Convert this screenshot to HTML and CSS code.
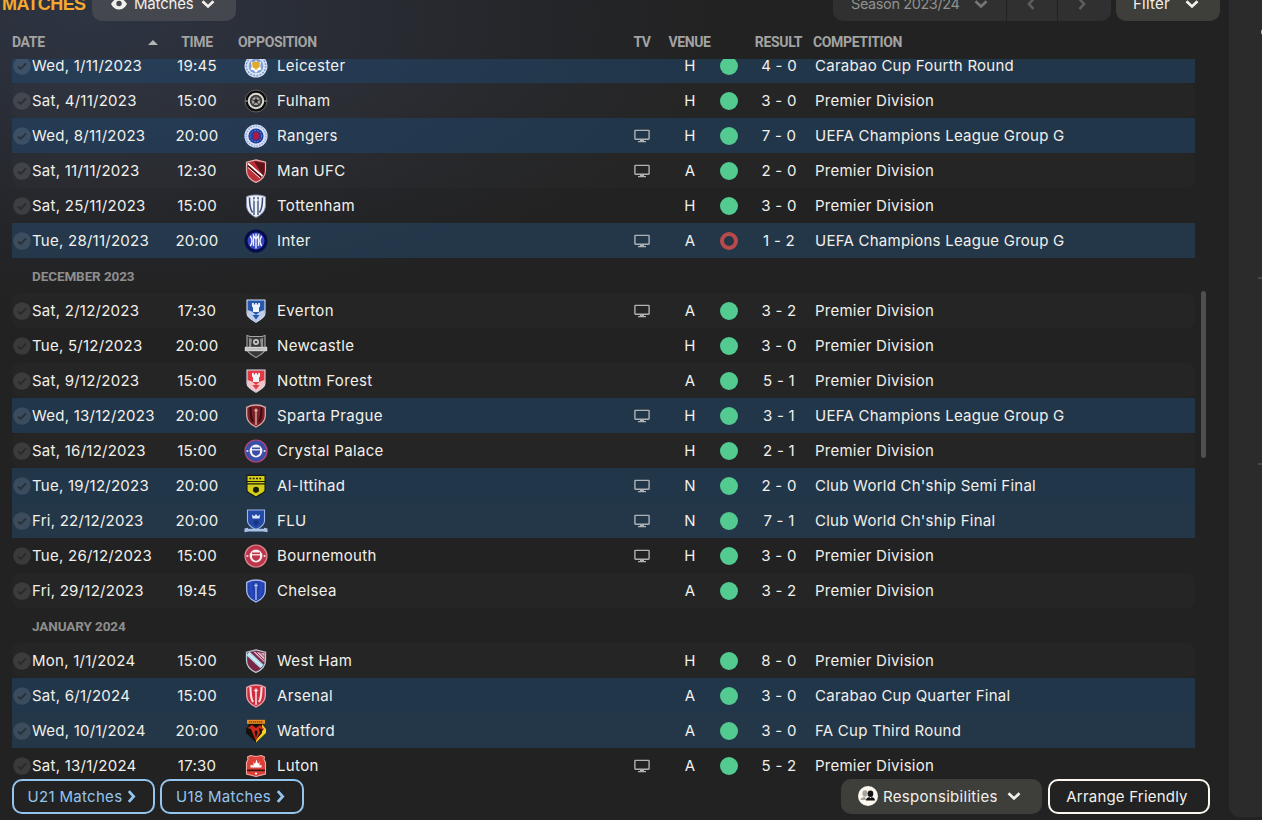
FILE: index.html
```
<!DOCTYPE html>
<html lang="en">
<head>
  <meta charset="UTF-8">
  <title>Matches</title>
  <link rel="stylesheet" href="styles.css">
</head>
<body>

  <!-- icons and club crests -->
  <svg class="defs" width="0" height="0">
    <symbol id="chevron" viewBox="0 0 14 14"><path d="M1.500 4.300L7 9.500l5.500-5.200" fill="none" stroke="currentColor" stroke-width="2.700"/></symbol>
    <symbol id="chevron-right" viewBox="0 0 10 14"><path d="M2.500 2l4.500 5-4.500 5" fill="none" stroke="currentColor" stroke-width="2.600"/></symbol>
    <symbol id="check" viewBox="0 0 18 18"><circle cx="9" cy="9" r="8.800" fill="#fff" fill-opacity=".11"/><path d="M5 9.500l2.700 2.500L13 6.300" fill="none" stroke="#1c1f22" stroke-opacity=".6" stroke-width="1.900"/></symbol>
    <symbol id="tv" viewBox="0 0 16 14"><rect x=".9" y="1.400" width="14.200" height="8.800" rx=".6" fill="none" stroke="currentColor" stroke-width="1.400"/><path d="M6 10.500h4v1.500h2v1.200H4V12h2z" fill="currentColor"/></symbol>
    <symbol id="eye" viewBox="0 0 16 12"><path d="M0 6C2 2.300 4.800.5 8 .5S14 2.300 16 6c-2 3.700-4.800 5.500-8 5.500S2 9.700 0 6z" fill="currentColor"/><circle cx="8" cy="5.500" r="2.700" fill="#44474e"/></symbol>
    <symbol id="people" viewBox="0 0 20 20"><circle cx="10" cy="10" r="10" fill="#fbf7ee"/><g fill="#a9a59e"><ellipse cx="7" cy="7.500" rx="2.600" ry="3.200"/><path d="M2.500 14c.3-2.500 2-2.800 4-3.300L9 14z"/></g><ellipse cx="12.500" cy="7.700" rx="2.800" ry="3.300" fill="#111"/><path d="M8 14.500c.2-2.600 1.600-3 3.300-3.500l1.200 1.300 1.200-1.300c1.700.5 3.100.9 3.300 3.500z" fill="#111"/></symbol>

    <symbol id="leicester" viewBox="0 0 24 24"><circle cx="12" cy="12" r="11.500" fill="#d9e4f5"/><circle cx="12" cy="12" r="9.700" fill="none" stroke="#7e9bd2" stroke-width="1.500" stroke-dasharray="2 1.200"/><circle cx="12" cy="12" r="7.300" fill="#7f9cd6"/><path d="M7 7.500l3.200 1L12 6l1.800 2.500 3.200-1-.7 4.500 1 3.500-3.300 1L12 19l-2-2.500-3.300-1 1-3.500z" fill="#fff"/><path d="M8 8.500l4-1 4 1-.5 5-2 .5-.5 2.500-1-2-1 2-.5-2.500-2-.5z" fill="#e0ab2c"/></symbol>
    <symbol id="fulham" viewBox="0 0 24 24"><circle cx="12" cy="12" r="11" fill="#0d0d0d" stroke="#6a6964" stroke-width=".9"/><circle cx="12" cy="12" r="7.200" fill="#3a3937" stroke="#dddbd6" stroke-width="2"/><path d="M12 7l4.800 3.500-1.800 5.500H9l-1.800-5.500z" fill="#a9a7a2"/><path d="M12 12V7M12 12l4.800-1.500M12 12l3 4M12 12l-3 4M12 12l-4.800-1.500" stroke="#2a2a2a" stroke-width="1"/><circle cx="12" cy="12" r="1.800" fill="#222"/><path d="M1.500 12h2M20.500 12h2" stroke="#ddd"/></symbol>
    <symbol id="rangers" viewBox="0 0 24 24"><circle cx="12" cy="12" r="11.600" fill="#d5e0f7"/><circle cx="12" cy="12" r="9.900" fill="none" stroke="#8fa8de" stroke-width="1.400" stroke-dasharray="1.500 1.200"/><circle cx="12" cy="12" r="7.600" fill="#203f9f"/><circle cx="12" cy="12" r="5.600" fill="none" stroke="#6f8bd0" stroke-width="1" stroke-dasharray="1.500 1.500"/><ellipse cx="12" cy="12" rx="3" ry="4" fill="#b01745"/></symbol>
    <symbol id="manufc" viewBox="0 0 24 24"><path d="M12 .8l9.500 2.400v8C21.500 17 17.500 21 12 23.400 6.500 21 2.500 17 2.500 11.200v-8z" fill="#ba2f38" stroke="#e5b1ae" stroke-width="1.200"/><path d="M10 2.200l10.600 1.700V12c0 2-.8 4-1.600 5z" fill="#5e1219"/><path d="M4 4.500L18.500 17" stroke="#fff" stroke-width="1.700"/><path d="M4 6.800L17 18" stroke="#2b1113" stroke-width="1.200"/><path d="M4 8.500L16 19" stroke="#fff" stroke-width=".9"/></symbol>
    <symbol id="tottenham" viewBox="0 0 24 24"><path d="M12 1c3 0 6 .3 9.500 1.700v8C21.500 17 17.500 21 12 23.400 6.500 21 2.500 17 2.500 10.700v-8C6 1.300 9 1 12 1z" fill="#eef1f6" stroke="#8390ae" stroke-width="1"/><path d="M5.500 3.500c0 6 0 11 3 15M18.500 3.500c0 6 0 11-3 15" fill="none" stroke="#334878" stroke-width="1.500"/><path d="M10 3v18M14 3v18" stroke="#334878" stroke-width="1.300"/><path d="M9.500 6h5" stroke="#fff" stroke-width="1.300"/></symbol>
    <symbol id="inter" viewBox="0 0 24 24"><circle cx="12" cy="12" r="11.500" fill="#070b4a"/><circle cx="12" cy="12" r="8.500" fill="#3546c4"/><path d="M6.300 7c2 3 2 7 0 10M17.700 7c-2 3-2 7 0 10M9.500 17V6.500l2.500 4 2.500-4V17M12 4.500v15" fill="none" stroke="#eef0ff" stroke-width="1.400"/></symbol>
    <symbol id="castle" viewBox="0 0 24 24"><path d="M3 1h18v13.500c0 3.500-5 6.500-9 8.800-4-2.300-9-5.300-9-8.800z" fill="currentColor" stroke="#d5e2f5" stroke-width="1.100"/><path d="M8 4h1.800v1.500h1.400V4h1.600v1.500h1.400V4H16v3.500l-1 1V13H9V8.500l-1-1z" fill="#f1f5fb"/><path d="M3.500 11l4.500 1.500 4 3.500 4-3.500 4.500-1.500v3.500c0 3-4.500 6-8.500 8-4-2-8.500-5-8.500-8z" fill="#fff" fill-opacity=".7"/><path d="M8.500 16h7L12 20.500z" fill="currentColor"/></symbol>
    <symbol id="newcastle" viewBox="0 0 24 24"><path d="M3 1.500l3 1h12l3-1v14c0 3-5 5.500-9 8-4-2.500-9-5-9-8z" fill="#383838" stroke="#a5a5a5" stroke-width="1.100"/><path d="M5 4l3 1-1 8H5zM19 4l-3 1 1 8h2z" fill="#8f8f8f"/><circle cx="12" cy="8" r="3" fill="#c9c9c9"/><circle cx="12" cy="8" r="1.300" fill="#444"/><path d="M.8 12.800h22.400v4.400H.8z" fill="#d2d2d2"/><path d="M3 15h18" stroke="#aaa" stroke-width=".8"/></symbol>
    <symbol id="sword" viewBox="0 0 24 24"><path d="M12 .8c3 0 6.500.9 9.500 2.400v8C21.500 17 17.500 21 12 23.400 6.500 21 2.500 17 2.500 11.200v-8C5.500 1.700 9 .8 12 .8z" fill="currentColor"/><path class="stripes" d="M6.500 3c0 6 0 11 2.500 15M17.500 3c0 6 0 11-2.500 15" fill="none" stroke-width="2"/><path d="M12 4.500V21M10.300 6.500h3.400" class="blade" stroke-width="1.300"/><path class="rim" d="M12 1c3 0 6.500.9 9.300 2.300v8C21.300 17 17.500 20.700 12 23 6.500 20.700 2.700 17 2.700 11.300v-8C5.500 1.900 9 1 12 1z" fill="none" stroke-width="1.300"/></symbol>
    <symbol id="roundel" viewBox="0 0 24 24"><circle cx="12" cy="12" r="11" fill="currentColor" class="ring" stroke-width="1.200"/><circle cx="12" cy="12" r="6.400" fill="#f4f0f4"/><path d="M8 8.500h8v4.500c0 2-2 3.300-4 4-2-.7-4-2-4-4z" fill="currentColor"/><path d="M7.500 10.800h9" stroke="#fff" stroke-width="1.200"/><path d="M2.500 12h1.800M19.700 12h1.800" stroke="#fff" stroke-width="1.400"/></symbol>
    <symbol id="ittihad" viewBox="0 0 24 24"><path d="M2.500.8h19v15c0 3-5 5.300-9.500 7.700-4.500-2.400-9.500-4.700-9.500-7.700z" fill="#17190b"/><path d="M3.500 2h17v5h-17zM3.500 8h17v1.300h-17zM3.500 10.500h17V16c0 2-4.500 4-8.500 6.200-4-2.200-8.500-4.200-8.500-6.200z" fill="#d3cc18"/><path d="M5.500 4.500h13" stroke="#17190b" stroke-width="1.300" stroke-dasharray="1.800 1.500"/><circle cx="12" cy="15.800" r="3" fill="#17190b"/></symbol>
    <symbol id="flu" viewBox="0 0 24 24"><path d="M3.500 1h17v11c0 4-4 6.500-8.500 8.500C7.500 18.500 3.500 16 3.500 12z" fill="#2449a5" stroke="#9db8ea" stroke-width="1.100"/><path d="M8.500 9.500L8 5.500l2.300 1.700L12 5l1.700 2.200L16 5.500l-.5 4z" fill="#dce8ff"/><path d="M9.500 11.500h5v3L12 17l-2.500-2.500z" fill="#16357f"/><path d="M.5 19.500l3.500-.8v1h16v-1l3.500.8v3.700l-4-.7h-15l-4 .7z" fill="#a9c2ea"/></symbol>
    <symbol id="westham" viewBox="0 0 24 24"><path d="M12 .8l9.500 2.400v8C21.500 17 17.500 21 12 23.400 6.500 21 2.500 17 2.500 11.200v-8z" fill="#7a2745" stroke="#b9c8d5" stroke-width="1.300"/><path d="M9 2.500l11.500 1.700v9z" fill="#dcb9c8"/><path d="M12 3l8 8M15.500 3l5 5M9.500 3.500l10 10" stroke="#8a3655" stroke-width="1"/><path d="M4 4.500L18 17.500" stroke="#a9dcec" stroke-width="5"/><path d="M4 4.500L18 17.500" stroke="#e1f2f8" stroke-width="1.200"/></symbol>
    <symbol id="watford" viewBox="0 0 24 24"><path d="M2 10l3.500-5h13L22 10v4L12 23.500 2 14z" fill="#15100a"/><path d="M18 5l4 5v4L12 23.500V21l6-7z" fill="#f2d21b"/><path d="M3.500 9L8 6l4 3 4-3 4 4-5 5-3 7-3-7-2-5z" fill="#cf2a1f"/><path d="M10.500 13l1.500 6 1.500-6-1.500-2zM15 9l4 2-3 3z" fill="#15100a"/><path d="M3 .8h18v4H3z" fill="#e88e22"/><path d="M5 2.800h14" stroke="#7a2c10" stroke-width="1.300" stroke-dasharray="1.300 .7"/></symbol>
    <symbol id="luton" viewBox="0 0 24 24"><path d="M3.500 3l3-1.500L12 2.500l5.500-1L20.500 3l-.5 2.500 1.500 3V20L12 22.500 2.500 20V8.500l1.500-3z" fill="#dc4038" stroke="#f0aaa2" stroke-width="1.100"/><path d="M6.500 11v2.500h11V11l-2 .5V8l-1.500 2-1.500-4.500L11 10 9.500 8v3.500z" fill="#fff"/><path d="M3 15.500h18v1.700H3z" fill="#3d1411"/><circle cx="12" cy="19.500" r="1.100" fill="#fff"/></symbol>
  </svg>

  <main class="matches">
    <div class="toolbar">
      <h1>Matches</h1>
      <div class="pill view"><svg class="eye"><use href="#eye"/></svg><span>Matches</span><svg class="chev"><use href="#chevron"/></svg></div>
      <div class="season">
        <div class="season-name"><span>Season 2023/24</span><svg class="chev"><use href="#chevron"/></svg></div>
        <div class="step"><svg class="arrow back"><use href="#chevron-right"/></svg></div>
        <div class="step"><svg class="arrow"><use href="#chevron-right"/></svg></div>
      </div>
      <div class="pill filter"><span>Filter</span><svg class="chev"><use href="#chevron"/></svg></div>
    </div>

    <div class="grid head">
      <div class="h-date"><span>Date</span><i class="sort"></i></div>
      <div class="center">Time</div>
      <div class="h-opp">Opposition</div>
      <div class="center">TV</div>
      <div class="center">Venue</div>
      <div></div>
      <div class="center">Result</div>
      <div class="h-comp">Competition</div>
    </div>

    <div class="list-wrap">
      <div class="list" id="list"></div>
      <div class="scrollbar"></div>
    </div>

    <div class="footer">
      <div class="btn blue">U21 Matches<svg class="arrow"><use href="#chevron-right"/></svg></div>
      <div class="btn blue">U18 Matches<svg class="arrow"><use href="#chevron-right"/></svg></div>
      <div class="pill resp"><svg class="people"><use href="#people"/></svg><span>Responsibilities</span><svg class="chev"><use href="#chevron"/></svg></div>
      <div class="btn white">Arrange Friendly</div>
    </div>
  </main>

  <aside class="side">
    <i class="gold"></i>
    <i class="tick first"></i>
    <i class="tick second"></i>
  </aside>

  <script src="script.js"></script>
</body>
</html>
```
FILE: styles.css
```
* {
  box-sizing: border-box;
}
body {
  margin: 0;
  width: 1262px;
  height: 820px;
  overflow: hidden;
  display: flex;
  background: radial-gradient(ellipse 640px 290px at 90px 20px, #2d3442 0%, #292c34 40%, #242528 75%, #222 100%) #222;
  color: #f2f0ea;
  font-family: Inter, "Liberation Sans", sans-serif;
  font-size: 15px;
  letter-spacing: 0.25px;
}
svg {
  display: block;
  flex: none;
}
.defs {
  position: absolute;
}
.matches {
  width: 1228px;
  height: 820px;
  display: flex;
  flex-direction: column;
}

/* top bar, scrolled half out of view */
.toolbar {
  display: flex;
  height: 35px;
  margin-top: -14px;
  line-height: 35px;
  flex: none;
}
h1 {
  width: 92px;
  margin: 0;
  padding-left: 2px;
  color: #f5a92f;
  font: bold 18px/37px "Liberation Sans", sans-serif;
  letter-spacing: -0.6px;
  text-transform: uppercase;
}
.pill {
  display: flex;
  align-items: center;
  border-radius: 10px;
  background: #3e3e3b;
  height: 35px;
}
.view {
  width: 144px;
  padding-left: 19px;
  background: #44474e;
  letter-spacing: -0.2px;
}
.eye {
  width: 16px;
  height: 12px;
  margin-right: 7px;
}
.view span {
  width: 67px;
}
.chev {
  width: 14px;
  height: 14px;
}
.season {
  display: flex;
  width: 278px;
  margin-left: 597px;
  border-radius: 10px;
  background: #303030;
  color: #90908e;
}
.season-name {
  display: flex;
  align-items: center;
  width: 173px;
  padding-left: 18px;
  font-size: 14.5px;
  letter-spacing: -0.4px;
}
.season-name span {
  width: 123px;
}
.season-name .chev {
  color: #777;
}
.step {
  display: flex;
  align-items: center;
  width: 51px;
  padding-left: 19px;
  border-left: 1px solid #222;
  color: #5e5e5e;
}
.arrow {
  width: 10px;
  height: 14px;
}
.back {
  transform: scaleX(-1);
}
.filter {
  width: 104px;
  margin-left: 5px;
  padding-left: 17px;
}
.filter span {
  width: 52px;
}

/* table columns */
.grid {
  display: grid;
  align-items: center;
  white-space: nowrap;
}
.center {
  display: flex;
  justify-content: center;
}
.head {
  grid-template-columns: 152px 66px 382px 60px 35px 43px 57px 1fr;
  height: 38px;
  margin-left: 12px;
  padding-top: 4px;
  flex: none;
  color: #a3a3a3;
  font: bold 14px Roboto, "Liberation Sans", sans-serif;
  letter-spacing: -0.35px;
  text-transform: uppercase;
}
.h-date {
  display: flex;
  align-items: center;
}
.h-date span {
  width: 136px;
}
.sort {
  border: 5px solid transparent;
  border-top: 0;
  border-bottom-color: #b5b5b5;
}
.h-opp {
  padding-left: 8px;
}
.h-comp {
  padding-left: 6px;
}

.list-wrap {
  display: flex;
  height: 720px;
  margin-left: 12px;
  overflow: hidden;
  flex: none;
}
.list {
  width: 1183px;
  margin-top: -11px;
}
.row {
  grid-template-columns: 20px 132px 66px 47px 335px 60px 36px 42px 58px 1fr;
  height: 35px;
  border-radius: 8px;
}
.row.alt {
  background: rgba(255, 255, 255, 0.017);
}
.row.cup {
  border-radius: 0;
  background: rgba(34, 74, 114, 0.5);
}
.row.cup.alt {
  background: rgba(38, 76, 112, 0.5);
}
.check {
  width: 18px;
  height: 18px;
  margin-left: 1px;
}
.crest {
  width: 24px;
  height: 24px;
  margin-left: 14px;
}
.name {
  letter-spacing: 0.35px;
}
.tv {
  width: 16px;
  height: 14px;
  color: #aeb2b5;
}
.dot {
  width: 18px;
  height: 18px;
  border-radius: 50%;
  background: #53ca90;
}
.dot.loss {
  background: none;
  border: 4.500px solid #b84a4b;
}
.comp {
  padding-left: 7px;
}
.month {
  height: 35px;
  padding-left: 20px;
  color: #8e8e8e;
  font: bold 13.5px/36px Roboto, "Liberation Sans", sans-serif;
  letter-spacing: -0.1px;
}
.scrollbar {
  width: 5px;
  height: 167px;
  margin: 232px 0 0 6px;
  border-radius: 3px;
  background: #504f4e;
}

/* crest colours */
.everton { color: #2558ad; }
.forest { color: #e23a43; }
.sparta { color: #7a1f27; --stripe: #3b0d12; --blade: #e7b9a9; --rim: #d9a8a6; }
.chelsea { color: #2442ad; --stripe: #2b4cc0; --blade: #b9c8f5; --rim: #a9b9ec; }
.arsenal { color: #d12d3f; --stripe: #f7e3e5; --blade: #fff; --rim: #e9a2ab; }
.palace { color: #3a4ea8; --ring: #b8457c; }
.bournemouth { color: #be3448; --ring: #dd8b95; }
.stripes { stroke: var(--stripe); }
.blade { stroke: var(--blade); }
.rim { stroke: var(--rim); }
.ring { stroke: var(--ring); }

/* bottom buttons */
.footer {
  display: flex;
  align-items: center;
  height: 35px;
  padding-left: 12px;
  flex: none;
}
.btn {
  display: flex;
  align-items: center;
  justify-content: center;
  height: 35px;
  border: 2px solid #93c5ef;
  border-radius: 10px;
}
.blue {
  width: 143px;
  margin-right: 5px;
  padding-right: 2px;
  color: #93c5ef;
  letter-spacing: 0.3px;
}
.blue + .blue {
  width: 144px;
}
.blue .arrow {
  width: 11px;
  height: 15px;
  margin: 0 0 1px 4px;
}
.resp {
  width: 201px;
  margin: -1px 0 0 532px;
  padding-left: 17px;
  letter-spacing: 0.3px;
}
.people {
  width: 20px;
  height: 20px;
  margin-right: 5px;
}
.resp .chev {
  margin-left: 9px;
}
.white {
  width: 162px;
  margin: -1px 0 0 6px;
  padding-right: 4px;
  border-color: #fbf7ee;
  letter-spacing: 0.2px;
}

/* neighbouring panel, cut off by the window edge */
.side {
  position: relative;
  width: 33px;
  height: 817px;
  margin-left: 1px;
  border-radius: 0 0 0 10px;
  background: #2b2b2b;
}
.tick {
  position: absolute;
  right: 0;
  width: 4px;
  height: 2px;
  background: #484848;
}
.first {
  top: 277px;
}
.second {
  top: 463px;
}
.gold {
  position: absolute;
  top: 30px;
  right: 0;
  width: 1px;
  height: 4px;
  background: #d8a92b;
}
```
FILE: script.js
```
// date, time, crest symbol, crest class, club, tv, venue, result, competition
const PL = "Premier Division";
const UCL = "UEFA Champions League Group G";
const matches = [
  ["Wed, 1/11/2023", "19:45", "leicester", "", "Leicester", 0, "H", "4 - 0", "Carabao Cup Fourth Round"],
  ["Sat, 4/11/2023", "15:00", "fulham", "", "Fulham", 0, "H", "3 - 0", PL],
  ["Wed, 8/11/2023", "20:00", "rangers", "", "Rangers", 1, "H", "7 - 0", UCL],
  ["Sat, 11/11/2023", "12:30", "manufc", "", "Man UFC", 1, "A", "2 - 0", PL],
  ["Sat, 25/11/2023", "15:00", "tottenham", "", "Tottenham", 0, "H", "3 - 0", PL],
  ["Tue, 28/11/2023", "20:00", "inter", "", "Inter", 1, "A", "1 - 2", UCL],
  "DECEMBER 2023",
  ["Sat, 2/12/2023", "17:30", "castle", "everton", "Everton", 1, "A", "3 - 2", PL],
  ["Tue, 5/12/2023", "20:00", "newcastle", "", "Newcastle", 0, "H", "3 - 0", PL],
  ["Sat, 9/12/2023", "15:00", "castle", "forest", "Nottm Forest", 0, "A", "5 - 1", PL],
  ["Wed, 13/12/2023", "20:00", "sword", "sparta", "Sparta Prague", 1, "H", "3 - 1", UCL],
  ["Sat, 16/12/2023", "15:00", "roundel", "palace", "Crystal Palace", 0, "H", "2 - 1", PL],
  ["Tue, 19/12/2023", "20:00", "ittihad", "", "Al-Ittihad", 1, "N", "2 - 0", "Club World Ch'ship Semi Final"],
  ["Fri, 22/12/2023", "20:00", "flu", "", "FLU", 1, "N", "7 - 1", "Club World Ch'ship Final"],
  ["Tue, 26/12/2023", "15:00", "roundel", "bournemouth", "Bournemouth", 1, "H", "3 - 0", PL],
  ["Fri, 29/12/2023", "19:45", "sword", "chelsea", "Chelsea", 0, "A", "3 - 2", PL],
  "JANUARY 2024",
  ["Mon, 1/1/2024", "15:00", "westham", "", "West Ham", 0, "H", "8 - 0", PL],
  ["Sat, 6/1/2024", "15:00", "sword", "arsenal", "Arsenal", 0, "A", "3 - 0", "Carabao Cup Quarter Final"],
  ["Wed, 10/1/2024", "20:00", "watford", "", "Watford", 0, "A", "3 - 0", "FA Cup Third Round"],
  ["Sat, 13/1/2024", "17:30", "luton", "", "Luton", 1, "A", "5 - 2", PL]
];

document.getElementById("list").innerHTML = matches.map((m, i) => {
  if (typeof m === "string") return `<div class="month">${m}</div>`;
  const [date, time, crest, colour, club, tv, venue, result, comp] = m;
  const [us, them] = result.split(" - ").map(Number);
  return `<div class="grid row ${i % 2 ? "alt" : ""} ${comp === PL ? "" : "cup"}">
    <svg class="check"><use href="#check"/></svg>
    <div class="date">${date}</div>
    <div class="center time">${time}</div>
    <svg class="crest ${colour}"><use href="#${crest}"/></svg>
    <div class="name">${club}</div>
    <div class="center">${tv ? '<svg class="tv"><use href="#tv"/></svg>' : ""}</div>
    <div class="center">${venue}</div>
    <div class="center"><i class="dot ${us < them ? "loss" : ""}"></i></div>
    <div class="center">${result}</div>
    <div class="comp">${comp}</div>
  </div>`;
}).join("");
```
